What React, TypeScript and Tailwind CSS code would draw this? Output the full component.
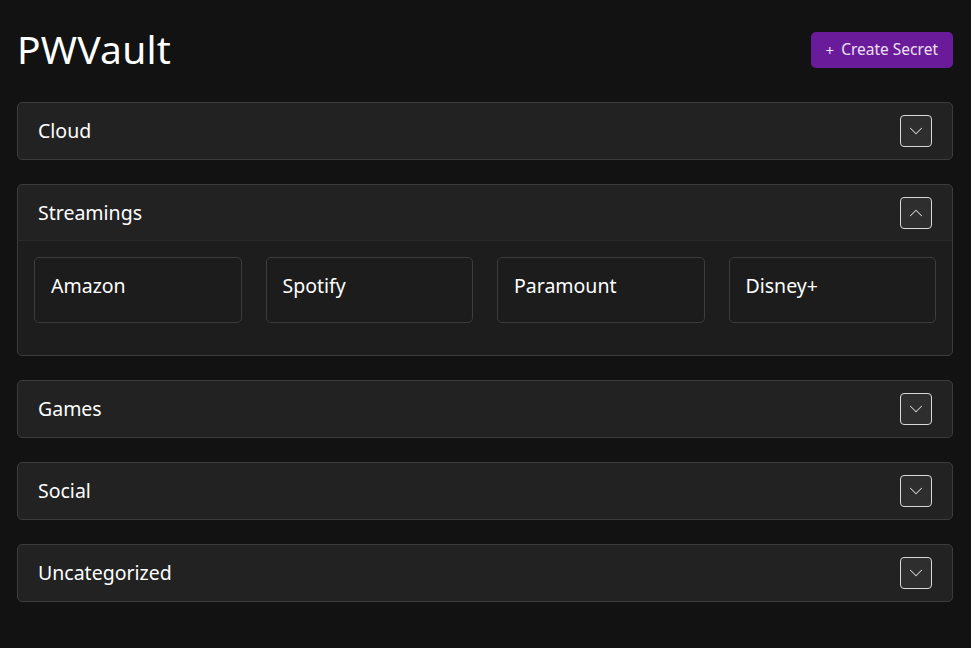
import { ChevronDown, ChevronUp } from 'lucide-react';

const categories = [
  { name: 'Cloud', open: false, items: [] as string[] },
  { name: 'Streamings', open: true, items: ['Amazon', 'Spotify', 'Paramount', 'Disney+'] },
  { name: 'Games', open: false, items: [] as string[] },
  { name: 'Social', open: false, items: [] as string[] },
  { name: 'Uncategorized', open: false, items: [] as string[] },
];

export default function App() {
  return (
    <div
      className="min-h-screen bg-[#121212] text-white pl-[17px] pr-[18px] pt-[24px] pb-10"
      style={{ fontFamily: '"Noto Sans", "Open Sans", sans-serif' }}
    >
      {/* Header */}
      <div className="flex items-center justify-between h-[48px]">
        <h1 className="text-[39px] leading-none font-normal tracking-[0.2px]">PWVault</h1>
        <button className="mt-[4px] h-[36px] px-[15px] rounded-[5px] bg-[#6a1b9a] text-[#ece1f3] text-[15.5px] flex items-center gap-[7px]">
          <span className="text-[15px] leading-none">+</span>
          <span>Create Secret</span>
        </button>
      </div>

      {/* Accordions */}
      <div className="mt-[30px] flex flex-col gap-[24px]">
        {categories.map((c) => (
          <div key={c.name} className="bg-[#222222] border border-[#3c3c3c] rounded-[5px]">
            <div
              className={`h-[56px] flex items-center justify-between pl-[20px] pr-[20px] ${
                c.open ? 'border-b border-[#2a2a2a]' : ''
              }`}
            >
              <span className="text-[19.5px]">{c.name}</span>
              <div className="w-[32px] h-[32px] rounded-[4px] border border-[#d8d8d8] bg-[#2e2e2e] flex items-center justify-center">
                {c.open ? (
                  <ChevronUp className="w-[22px] h-[22px] text-[#d8d8d8]" strokeWidth={1.1} />
                ) : (
                  <ChevronDown className="w-[22px] h-[22px] text-[#d8d8d8]" strokeWidth={1.1} />
                )}
              </div>
            </div>
            {c.open && (
              <div className="bg-[#1d1d1d] rounded-b-[5px] px-[16px] pt-[16px] pb-[32px] grid grid-cols-4 gap-[24px]">
                {c.items.map((it) => (
                  <div
                    key={it}
                    className="h-[66px] border border-[#3c3c3c] rounded-[5px] bg-[#1c1c1c] pl-[16px] pt-[15px] text-[19.5px] leading-[26px]"
                  >
                    {it}
                  </div>
                ))}
              </div>
            )}
          </div>
        ))}
      </div>
    </div>
  );
}
